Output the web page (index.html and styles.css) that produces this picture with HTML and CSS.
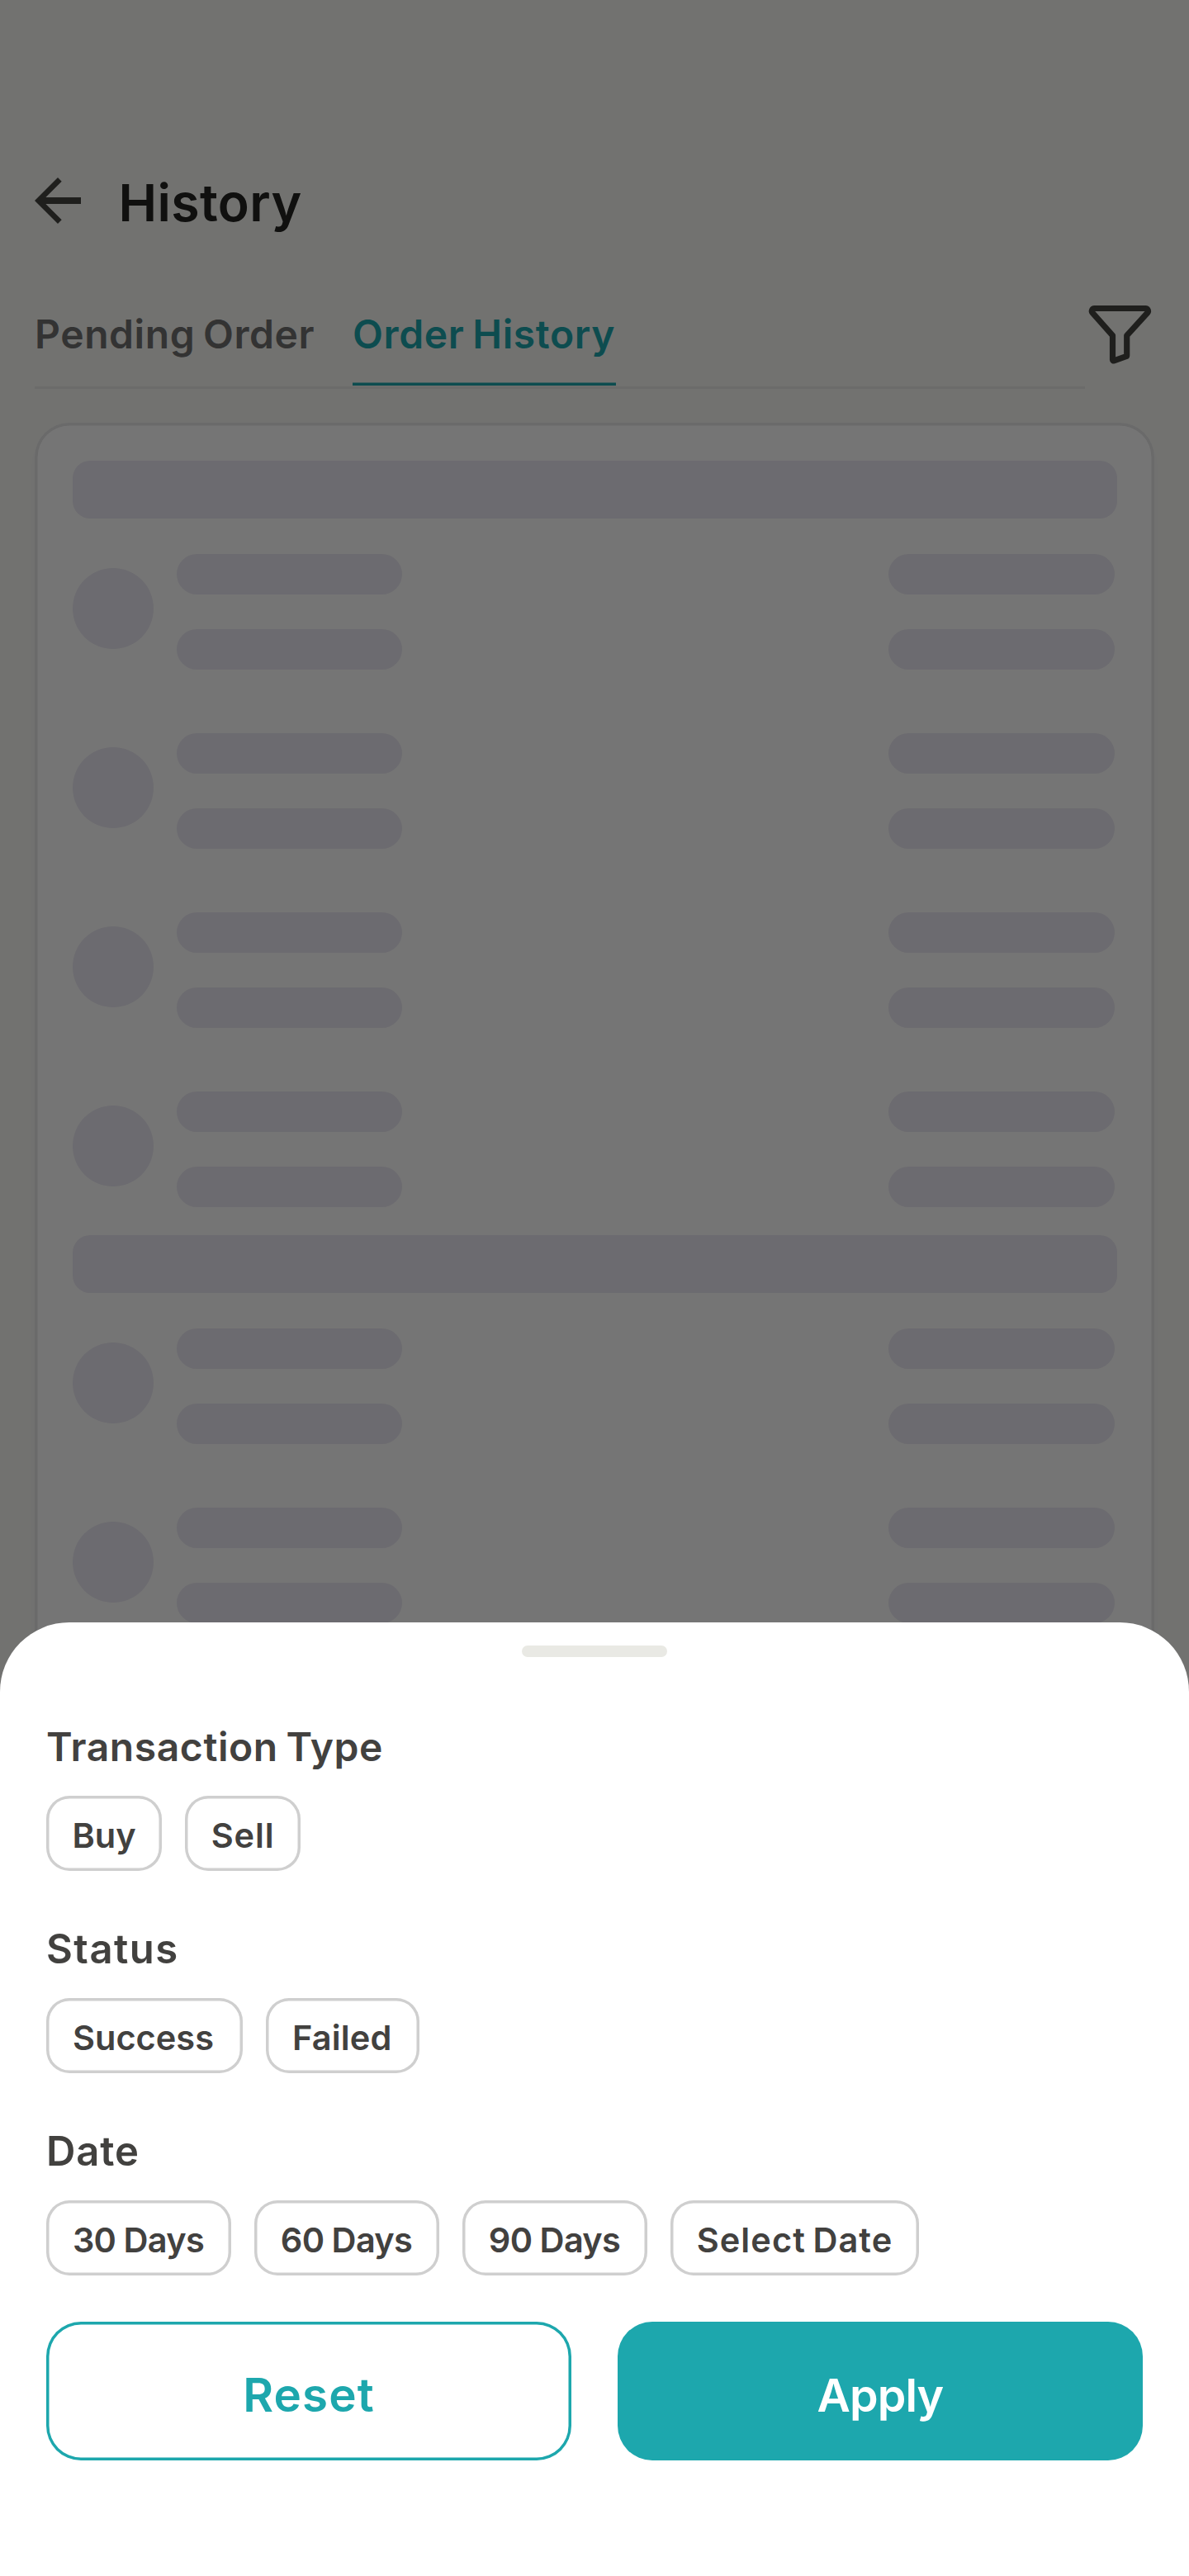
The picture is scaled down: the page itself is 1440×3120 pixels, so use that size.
FILE: index.html
```html
<!DOCTYPE html>
<html lang="en">
<head>
<meta charset="utf-8">
<title>History</title>
<link rel="stylesheet" href="styles.css">
</head>
<body>
<div class="screen">
  <main class="page">
    <header class="header">
      <svg class="back" viewBox="0 0 84 84"><path d="M0 42 28 14l4.7 4.7L13.4 38H56v8H13.4l19.3 19.3L28 70z"/></svg>
      <h1 class="title">History</h1>
    </header>
    <div class="toolbar">
      <nav class="tabs">
        <a class="tab tab-pending">Pending Order</a>
        <a class="tab tab-active">Order History</a>
      </nav>
      <svg class="filter" viewBox="0 0 84 84"><path d="M11.5 10.5h61.8a3.2 3.2 0 0 1 2.4 5.3L50.7 43.4v24a1.4 1.4 0 0 1-.9 1.3l-14.6 5.2a1.3 1.3 0 0 1-1.7-1.2V43.4L9.1 15.8a3.2 3.2 0 0 1 2.4-5.3z"/></svg>
    </div>
    <section class="card">
      <div class="bar"></div>
      <div class="row"><i class="dot"></i><div class="lines"><i></i><i></i></div><div class="lines end"><i></i><i></i></div></div>
      <div class="row"><i class="dot"></i><div class="lines"><i></i><i></i></div><div class="lines end"><i></i><i></i></div></div>
      <div class="row"><i class="dot"></i><div class="lines"><i></i><i></i></div><div class="lines end"><i></i><i></i></div></div>
      <div class="row last"><i class="dot"></i><div class="lines"><i></i><i></i></div><div class="lines end"><i></i><i></i></div></div>
      <div class="bar"></div>
      <div class="row"><i class="dot"></i><div class="lines"><i></i><i></i></div><div class="lines end"><i></i><i></i></div></div>
      <div class="row"><i class="dot"></i><div class="lines"><i></i><i></i></div><div class="lines end"><i></i><i></i></div></div>
    </section>
  </main>
  <div class="scrim"></div>
  <div class="sheet">
    <div class="grabber"></div>
    <section class="group">
      <h2 class="label">Transaction Type</h2>
      <div class="chips"><button class="chip buy">Buy</button><button class="chip sell">Sell</button></div>
    </section>
    <section class="group">
      <h2 class="label label-status">Status</h2>
      <div class="chips"><button class="chip success">Success</button><button class="chip failed">Failed</button></div>
    </section>
    <section class="group">
      <h2 class="label label-date">Date</h2>
      <div class="chips"><button class="chip days">30 Days</button><button class="chip days">60 Days</button><button class="chip days">90 Days</button><button class="chip custom">Select Date</button></div>
    </section>
    <div class="actions">
      <button class="action reset">Reset</button>
      <button class="action apply">Apply</button>
    </div>
  </div>
</div>
</body>
</html>
```

FILE: styles.css
```css
* { box-sizing: border-box; }
body { margin: 0; font-family: Inter, "Open Sans", sans-serif; font-weight: 600; word-spacing: -3px; }
h1, h2 { margin: 0; font-weight: 600; }
button { border: 0; background: none; padding: 0; font: inherit; word-spacing: inherit; }

.screen { position: relative; width: 1440px; height: 3120px; overflow: hidden; background: #f9f9f5; }
.page { height: 100%; padding: 201px 42px 0; display: flex; flex-direction: column; }

.header { display: flex; align-items: center; height: 84px; gap: 17.5px; }
.back { width: 84px; height: 84px; fill: #454541; }
.title { padding-top: 3px; font-size: 62.5px; line-height: 84px; letter-spacing: 0.4px; color: #242422; }

.toolbar { display: flex; height: 128px; margin-top: 57.5px; }
.tabs { width: 1272px; display: flex; gap: 42px; border-bottom: 3.5px solid #eaeae8; }
.tab { height: 124.5px; line-height: 124.5px; font-size: 48px; white-space: nowrap; color: #6f6f6f; }
.tab-pending { width: 343px; letter-spacing: 0.57px; }
.tab-active { width: 318.5px; letter-spacing: 0.64px; color: #1da7ad; box-shadow: inset 0 -3.5px #1da7ad; }
.filter { width: 84px; height: 84px; margin-top: 20.5px; fill: none; stroke: #454541; stroke-width: 7.2; stroke-linejoin: round; }

.card { flex: 1; margin-top: 41.5px; padding: 46px 45.5px; border-radius: 42px; background: #fff; box-shadow: inset 0 0 0 3.5px #e7e7e7, 0 7px 18px rgba(0, 0, 0, .025); }
.bar { height: 70px; border-radius: 21px; background: #ebe9f3; }
.row { display: flex; margin-top: 43px; height: 140px; margin-bottom: 77px; }
.row + .row { margin-top: 0; }
.row.last { margin-bottom: 34px; }
.dot { width: 98px; height: 98px; margin: 16.5px 28px 0 0; border-radius: 50%; background: #ebe9f3; }
.lines { display: flex; flex-direction: column; gap: 42px; }
.lines i { width: 273.5px; height: 49px; border-radius: 24.5px; background: #ebe9f3; }
.end { margin-left: auto; margin-right: 3px; }

.scrim { position: absolute; inset: 0; background: rgba(0, 0, 0, .54); }

.sheet { position: absolute; inset: 1965px 0 0; padding: 28px 56px 0; border-radius: 84px 84px 0 0; background: #fff; }
.grabber { width: 176px; height: 14px; margin: 0 auto 76.5px; border-radius: 7px; background: #e9e9e4; }
.group { display: flex; flex-direction: column; gap: 27.5px; margin-bottom: 62.5px; }
.label { font-size: 48px; line-height: 64px; letter-spacing: 0.57px; color: #42413f; }
.label-status { font-size: 49px; letter-spacing: 1.5px; }
.label-date { font-size: 49px; letter-spacing: 0.9px; }
.chips { display: flex; gap: 28px; }
.chip { height: 91px; padding-top: 5px; border-radius: 28px; box-shadow: inset 0 0 0 3.5px #cfcfcf; font-size: 41.5px; color: #42413f; white-space: nowrap; }
.buy { width: 140px; }
.sell { width: 140px; letter-spacing: 0.87px; }
.success { width: 238px; padding-right: 3px; }
.failed { width: 185.5px; padding-right: 1px; letter-spacing: 0.16px; }
.days { width: 224px; padding-right: 1px; letter-spacing: -0.7px; word-spacing: -0.5px; }
.custom { width: 301px; letter-spacing: 1.07px; }
.actions { display: flex; gap: 56px; margin-top: -6.5px; }
.action { flex: 1; height: 168px; padding-top: 9px; border-radius: 42px; font-size: 55.5px; }
.reset { color: #1da7ad; font-size: 56.5px; letter-spacing: 1.1px; box-shadow: inset 0 0 0 3.5px #1da7ad; }
.apply { color: #fff; letter-spacing: -0.9px; background: #1da7ad; }
```
